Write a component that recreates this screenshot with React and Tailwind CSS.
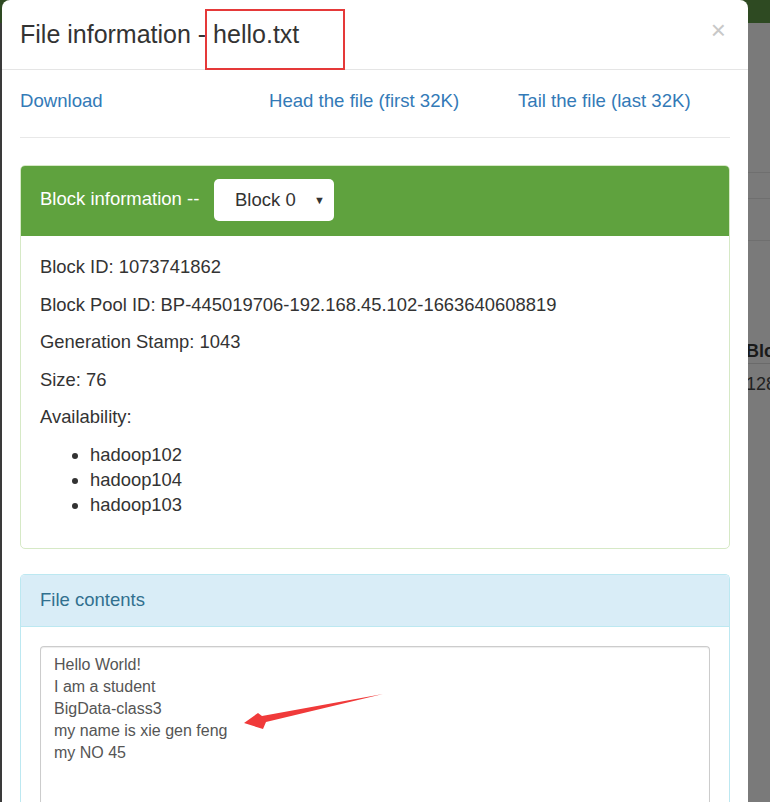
import React from 'react';

const font = { fontFamily: '"Liberation Sans", Arial, sans-serif' };

const BlockPanel = () => (
  <div className="rounded-[5px] border border-[#d6e9c6] bg-white">
    <div className="flex h-[70px] items-center rounded-t-[4px] bg-[#5fa23e] px-[19px]">
      <span className="-mt-[5px] w-[174px] text-[18.5px] text-white">Block information --</span>
      <div className="-mt-[2px] flex h-[42px] w-[120px] items-center justify-between rounded-[5px] bg-white pl-[21px] pr-[9px] text-[18.5px] text-[#333]">
        <span>Block 0</span>
        <span className="text-[11px]">▼</span>
      </div>
    </div>
    <div className="flex flex-col px-[19px] pt-[18px] pb-[31px] text-[18.4px] leading-[25px] text-[#333]">
      <p className="mb-[12.5px]">Block ID: 1073741862</p>
      <p className="mb-[12.5px]">Block Pool ID: BP-445019706-192.168.45.102-1663640608819</p>
      <p className="mb-[12.5px]">Generation Stamp: 1043</p>
      <p className="mb-[12.5px]">Size: 76</p>
      <p className="mb-[12.5px]">Availability:</p>
      <ul className="list-disc pl-[50px]">
        <li>hadoop102</li>
        <li>hadoop104</li>
        <li>hadoop103</li>
      </ul>
    </div>
  </div>
);

const ContentsPanel = () => (
  <div className="relative rounded-t-[5px] border border-b-0 border-[#bce8f1] bg-white">
    <div className="flex h-[52px] items-center rounded-t-[4px] border-b border-[#bce8f1] bg-[#d9edf7] px-[19px] text-[18.5px] text-[#31708f]">
      File contents
    </div>
    <div className="px-[19px] pt-[19px]">
      <div className="h-[200px] rounded-t-[4px] border border-b-0 border-[#ccc] px-[13px] pt-[7px] text-[16px] leading-[22px] text-[#555] shadow-[inset_0_1px_1px_rgba(0,0,0,0.075)]">
        <div>Hello World!</div>
        <div>I am a student</div>
        <div>BigData-class3</div>
        <div>my name is xie gen feng</div>
        <div>my NO 45</div>
      </div>
    </div>
    {/* red annotation arrow */}
    <svg className="absolute left-[180px] top-[100px]" width="220" height="70" viewBox="0 0 220 70">
      <polygon points="182,19 65,47 62,54 43,48 57,38 61,41" fill="#f03a3a" />
    </svg>
  </div>
);

export default function App() {
  return (
    <div className="relative h-[802px] w-[770px] overflow-hidden bg-[#7a7a7a]" style={font}>
      {/* backdrop: dimmed page behind the modal */}
      <div className="absolute left-0 top-0 h-[23px] w-full bg-[#2e4a22]" />
      <div className="absolute left-0 top-[23px] h-full w-[2px] bg-[#3a3a3a]" />
      <div className="absolute right-0 top-[23px] flex w-[24px] flex-col">
        <div className="h-[150px] border-b border-[#6f6f6f]" />
        <div className="h-[26px] border-b border-[#6f6f6f]" />
        <div className="h-[42px] border-b border-[#6f6f6f]" />
        <div className="h-[100px]" />
        <div className="h-[23px] border-b border-[#6a6a6a] text-[18px] font-bold leading-[20px] text-[#1a1a1a]">Blo</div>
        <div className="pt-[10px] text-[18px] leading-[20px] text-[#222]">128</div>
      </div>
      <div className="absolute right-[22px] top-[23px] h-full w-[6px] bg-gradient-to-r from-transparent to-[#00000022]" />

      <div className="relative ml-[2px] w-[746px] rounded-t-[8px] bg-white">
        {/* header */}
        <div className="flex h-[70px] items-center justify-between border-b border-[#e5e5e5] pl-[18px] pr-[22px]">
          <h4 className="text-[25px] text-[#333]">File information - hello.txt</h4>
          <span className="-mt-[10px] text-[26px] leading-none text-[#c8c8c8]">×</span>
        </div>
        <div className="absolute left-[203px] top-[9px] h-[61px] w-[140px] border-2 border-[#e53939]" />

        {/* body */}
        <div className="px-[18px]">
          <div className="grid h-[68px] grid-cols-[249px_249px_1fr] items-center border-b border-[#e8e8e8] pb-[6px] text-[18.6px] text-[#337ab7]">
            <a>Download</a>
            <a>Head the file (first 32K)</a>
            <a>Tail the file (last 32K)</a>
          </div>
          <div className="pt-[27px]">
            <BlockPanel />
          </div>
          <div className="pt-[25px]">
            <ContentsPanel />
          </div>
        </div>
      </div>
    </div>
  );
}
